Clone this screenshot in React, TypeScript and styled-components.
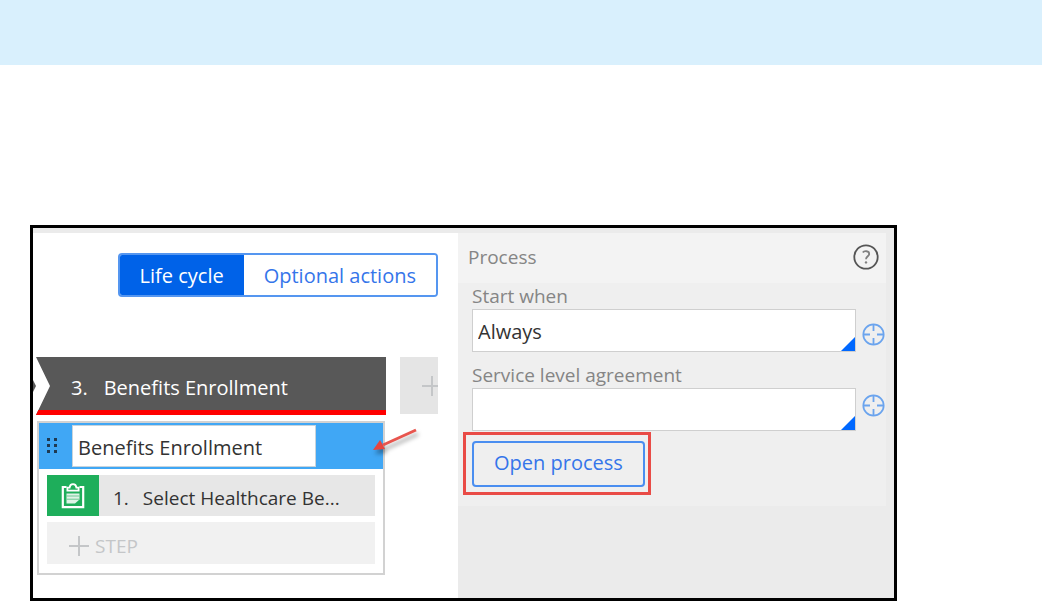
import React from "react";
import styled, { createGlobalStyle } from "styled-components";

const GlobalStyle = createGlobalStyle`
  *, *::before, *::after { box-sizing: border-box; }
  body {
    margin: 0;
    background: #fff;
    font-family: "Open Sans", "Noto Sans", sans-serif;
    font-size: 20px;
    line-height: 26px;
    color: #333;
  }
  button, input, select { font: inherit; margin: 0; }
`;

const Banner = styled.header`
  height: 65px;
  background: #d9f0fd;
`;

const Frame = styled.main`
  margin: 160px 145px 0 30px;
  border: 3px solid #000;
  display: grid;
  grid-template-columns: minmax(0, 425fr) minmax(0, 436fr);
  min-height: 376px;
`;

const Canvas = styled.section`
  border-top: 5px solid #ebebeb;
  padding: 20px 20px 23px 3px;
`;

const Toggle = styled.div`
  display: flex;
  width: fit-content;
  margin-left: auto;
  border: 2px solid #5596f0;
  border-radius: 4px;
  overflow: hidden;
`;

const ToggleButton = styled.button<{ $active?: boolean }>`
  border: 0;
  height: 40px;
  padding: 2px 20px 0;
  white-space: nowrap;
  background: ${(p) => (p.$active ? "#0062e8" : "#fff")};
  color: ${(p) => (p.$active ? "#fff" : "#3575ea")};
`;

const Stages = styled.div`
  position: relative;
  display: flex;
  justify-content: space-between;
  gap: 14px;
  margin-top: 60px;
`;

const StageTip = styled.span`
  position: absolute;
  left: -3px;
  top: 23px;
  border: 6px solid transparent;
  border-left: 3px solid #585858;
  border-right: 0;
`;

const Stage = styled.div`
  flex: 0 1 350px;
  min-width: 0;
  height: 58px;
  display: flex;
  align-items: center;
  gap: 16px;
  padding: 8px 0 0 35px;
  white-space: nowrap;
  color: #fff;
  background: #585858;
  border-bottom: 5px solid #f00;
  clip-path: polygon(0 0, 100% 0, 100% 100%, 0 100%, 14px 50%);
`;

const AddStage = styled.button`
  flex: 0 0 38px;
  height: 57px;
  border: 0;
  padding: 0;
  background: #e5e5e5;
  display: flex;
  align-items: center;
  justify-content: flex-end;
`;

const ProcessCard = styled.div`
  position: relative;
  width: 348px;
  max-width: 100%;
  margin-top: 6px;
  margin-left: 1px;
  border: 2px solid #d2d2d2;
  background: #fff;
`;

const ProcessHeader = styled.div`
  display: flex;
  align-items: center;
  gap: 15px;
  padding: 2px 0 2px 8px;
  background: #40a7f5;
`;

const NameInput = styled.input`
  width: 244px;
  min-width: 0;
  height: 42px;
  padding: 2px 5px 0;
  border: 1px solid #c8d4dc;
  background: #fff;
  color: #333;
`;

const Steps = styled.div`
  display: flex;
  flex-direction: column;
  gap: 6px;
  padding: 6px 8px 9px;
  font-size: 19px;
`;

const StepRow = styled.div`
  display: flex;
  align-items: center;
  height: 41px;
  gap: 14px;
  background: #e7e7e7;
  white-space: nowrap;

  > span:not(:first-child) { padding-top: 4px; }
`;

const StepIcon = styled.span`
  display: grid;
  place-items: center;
  width: 52px;
  height: 100%;
  background: #1eae5b;
`;

const AddStep = styled.button`
  display: flex;
  align-items: center;
  gap: 6px;
  height: 42px;
  padding: 6px 22px 0;
  border: 0;
  background: #f1f1f1;
  color: #c4c6c8;
`;

const Pointer = styled.svg`
  position: absolute;
  right: -38px;
  top: 0;
  overflow: visible;
  filter: drop-shadow(2px 4px 2px rgba(0, 0, 0, 0.35));
`;

const Panel = styled.aside`
  background: #ebebeb;
  padding: 5px 8px 0 0;
`;

const PanelHeader = styled.div`
  display: flex;
  align-items: center;
  justify-content: space-between;
  height: 50px;
  padding: 0 7px 2px 10px;
  background: #f3f3f3;
  color: #858585;
  font-size: 19px;
`;

const IconButton = styled.button`
  display: flex;
  border: 0;
  padding: 0;
  background: none;
`;

const Form = styled.form`
  background: #efefef;
  padding: 0 1px 19px 14px;
`;

const Field = styled.div`
  margin-bottom: 10px;
`;

const Label = styled.label`
  display: block;
  color: #858585;
  font-size: 19px;
`;

const FieldRow = styled.div<{ $align: "start" | "end" }>`
  display: flex;
  align-items: ${(p) => p.$align};
  gap: 6px;
  & > button { padding: 6px 0; }
`;

const SelectBox = styled.div`
  position: relative;
  flex: 1;
  &::after {
    content: "";
    position: absolute;
    right: 1px;
    bottom: 1px;
    border: 7px solid #0068ff;
    border-top-color: transparent;
    border-left-color: transparent;
    pointer-events: none;
  }
`;

const Select = styled.select`
  appearance: none;
  display: block;
  width: 100%;
  height: 43px;
  padding: 2px 5px 0;
  border: 1px solid #cfcfcf;
  border-radius: 0;
  background: #fff;
  color: #333;
`;

const Highlight = styled.div`
  position: relative;
  width: fit-content;
  &::after {
    content: "";
    position: absolute;
    inset: -9px -6px -8px -9px;
    border: 3px solid #e94b46;
    pointer-events: none;
  }
`;

const OpenButton = styled.button`
  display: block;
  height: 46px;
  padding: 0 20px 2px;
  border: 2px solid #4a8ef0;
  border-radius: 4px;
  background: #efefef;
  color: #3575ea;
  white-space: nowrap;
`;

const Plus = ({ size = 20 }: { size?: number }) => (
  <svg width={size} height={20} viewBox={`0 0 ${size} 20`} aria-hidden="true">
    <path d="M0 10H20M10 0V20" stroke="#c4c6c8" strokeWidth="2" />
  </svg>
);

const Grip = () => (
  <svg width="10" height="16" viewBox="0 0 10 16" fill="#1f3a52" aria-hidden="true">
    {[0, 6, 12].map((y) => (
      <React.Fragment key={y}>
        <rect x="0" y={y} width="3" height="3" />
        <rect x="7" y={y} width="3" height="3" />
      </React.Fragment>
    ))}
  </svg>
);

const Clipboard = () => (
  <svg width="24" height="26" viewBox="0 0 24 26" fill="none" stroke="#fff" aria-hidden="true">
    <path d="M5.5 4H1.8V24.200H22.200V4H18.500" strokeWidth="2.200" />
    <path d="M6.400 7.600V4.600H8.600C8.800 2.300 10 1.200 12 1.200S15.200 2.300 15.400 4.600H17.600V7.600Z" strokeWidth="1.800" />
    <path d="M5.500 10.500H18.500V16.500L14 20.500H5.500Z" fill="#dff3e7" stroke="none" />
    <path d="M5.500 13H18.500M5.500 16.200H18.500" stroke="#6cc993" strokeWidth="1" />
  </svg>
);

const Target = () => (
  <svg width="23" height="23" viewBox="0 0 23 23" fill="none" stroke="#6ba4ee" aria-hidden="true">
    <circle cx="11.500" cy="11.500" r="10.200" strokeWidth="1.700" />
    <path d="M11.500 1.500V8M11.500 15V21.500M1.500 11.500H8M15 11.500H21.500" strokeWidth="1.800" />
  </svg>
);

const Help = () => (
  <svg width="26" height="26" viewBox="0 0 26 26" fill="none" stroke="#555" aria-hidden="true">
    <circle cx="13" cy="13" r="11.700" strokeWidth="1.800" />
    <path d="M9.800 8.600C11.200 6.500 16.200 6.700 16.200 9.900C16.200 12.200 13 12.300 13 15.200" stroke="#808080" strokeWidth="1.800" />
    <circle cx="13" cy="18.400" r="1.200" fill="#808080" stroke="none" />
  </svg>
);

export default function App() {
  return (
    <>
      <GlobalStyle />
      <Banner />
      <Frame>
        <Canvas>
          <Toggle>
            <ToggleButton type="button" $active aria-pressed="true">Life cycle</ToggleButton>
            <ToggleButton type="button" aria-pressed="false">Optional actions</ToggleButton>
          </Toggle>
          <Stages>
            <StageTip />
            <Stage>
              <span>3.</span>
              <span>Benefits Enrollment</span>
            </Stage>
            <AddStage type="button" aria-label="Add stage">
              <Plus size={16} />
            </AddStage>
          </Stages>
          <ProcessCard>
            <ProcessHeader>
              <Grip />
              <NameInput aria-label="Process name" defaultValue="Benefits Enrollment" />
            </ProcessHeader>
            <Steps>
              <StepRow>
                <StepIcon><Clipboard /></StepIcon>
                <span>1.</span>
                <span>Select Healthcare Be...</span>
              </StepRow>
              <AddStep type="button">
                <Plus size={20} />
                STEP
              </AddStep>
            </Steps>
            <Pointer width="50" height="30" viewBox="0 0 50 30" aria-hidden="true">
              <path d="M45 7L12 22" stroke="#e8554e" strokeWidth="3" />
              <path d="M2 27L9 17L14 26Z" fill="#e8453f" />
            </Pointer>
          </ProcessCard>
        </Canvas>
        <Panel>
          <PanelHeader>
            <span>Process</span>
            <IconButton type="button" aria-label="Help"><Help /></IconButton>
          </PanelHeader>
          <Form onSubmit={(e) => e.preventDefault()}>
            <Field>
              <Label htmlFor="start">Start when</Label>
              <FieldRow $align="end">
                <SelectBox>
                  <Select id="start"><option>Always</option></Select>
                </SelectBox>
                <IconButton type="button" aria-label="Open start condition"><Target /></IconButton>
              </FieldRow>
            </Field>
            <Field>
              <Label htmlFor="sla">Service level agreement</Label>
              <FieldRow $align="start">
                <SelectBox>
                  <Select id="sla"><option></option></Select>
                </SelectBox>
                <IconButton type="button" aria-label="Open agreement"><Target /></IconButton>
              </FieldRow>
            </Field>
            <Highlight>
              <OpenButton type="button">Open process</OpenButton>
            </Highlight>
          </Form>
        </Panel>
      </Frame>
    </>
  );
}
